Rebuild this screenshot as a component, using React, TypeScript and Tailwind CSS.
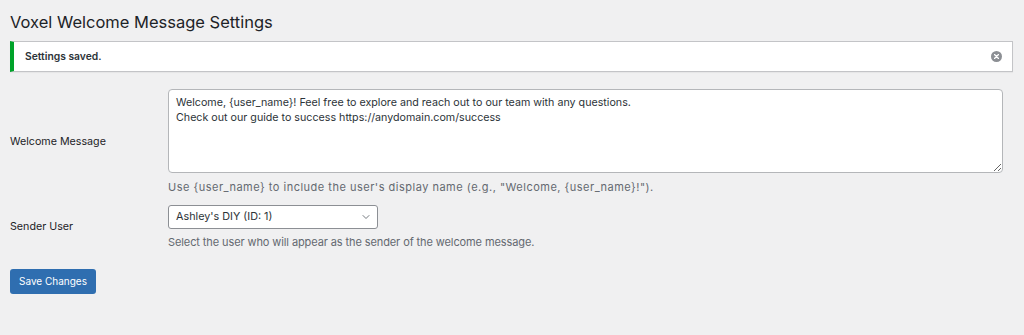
import { ChevronDown } from "lucide-react";

const font = { fontFamily: "Inter, 'Liberation Sans', sans-serif" };

function Notice() {
	return (
		<div className="mt-[7px] mr-[11px] flex h-[31px] items-center justify-between border border-[#c3c4c7] border-l-4 border-l-[#00a32a] bg-white pl-[11px] pr-[10px] shadow-[0_1px_1px_rgba(0,0,0,0.04)]">
			<p className="text-[10.3px] font-semibold text-[#2c3338]">Settings saved.</p>
			<span className="flex h-[11px] w-[11px] items-center justify-center rounded-full bg-[#8c8f94]">
				<svg width="5" height="5" viewBox="0 0 10 10">
					<path d="M1 1 L9 9 M9 1 L1 9" stroke="white" strokeWidth="2.6" strokeLinecap="round" />
				</svg>
			</span>
		</div>
	);
}

export default function App() {
	return (
		<div className="min-h-[335px] w-full bg-[#f0f0f1] pl-[10px] text-[#1d2327]" style={font}>
			<h1 className="pt-[10px] text-[16.5px] leading-[24px] font-normal text-[#1d2327]">Voxel Welcome Message Settings</h1>
			<Notice />

			<div className="mt-[17px] flex items-center">
				<div className="w-[158px] text-[10.7px] text-[#1d2327]">Welcome Message</div>
				<div className="flex-1 pr-[20px]">
					<textarea
						className="block h-[84px] w-[835px] resize-y rounded-[4px] border border-[#b4b6b9] bg-white px-[7px] py-[5px] text-[10.7px] leading-[15px] text-[#2c3338] outline-none"
						defaultValue={"Welcome, {user_name}! Feel free to explore and reach out to our team with any questions.\nCheck out our guide to success https://anydomain.com/success"}
					/>
					<p className="mt-[7px] text-[11px] leading-[15px] tracking-[0.5px] text-[#646970]">
						Use {"{user_name}"} to include the user's display name (e.g., "Welcome, {"{user_name}"}!").
					</p>
				</div>
			</div>

			<div className="mt-[10px] flex items-center">
				<div className="w-[158px] text-[10.7px] text-[#1d2327]">Sender User</div>
				<div className="flex-1">
					<div className="flex h-[24px] w-[210px] items-center justify-between rounded-[3px] border border-[#8c8f94] bg-white pl-[7px] pr-[5px] text-[10.8px] text-[#2c3338]">
						<span>Ashley's DIY (ID: 1)</span>
						<ChevronDown size={12} strokeWidth={1.6} className="text-[#50575e]" />
					</div>
					<p className="mt-[6px] text-[11px] leading-[15px] tracking-[-0.1px] text-[#646970]">
						Select the user who will appear as the sender of the welcome message.
					</p>
				</div>
			</div>

			<button className="mt-[19px] flex h-[25px] w-[86px] items-center justify-center rounded-[3px] bg-[#2f6eb0] text-[10px] text-white">
				Save Changes
			</button>
		</div>
	);
}
